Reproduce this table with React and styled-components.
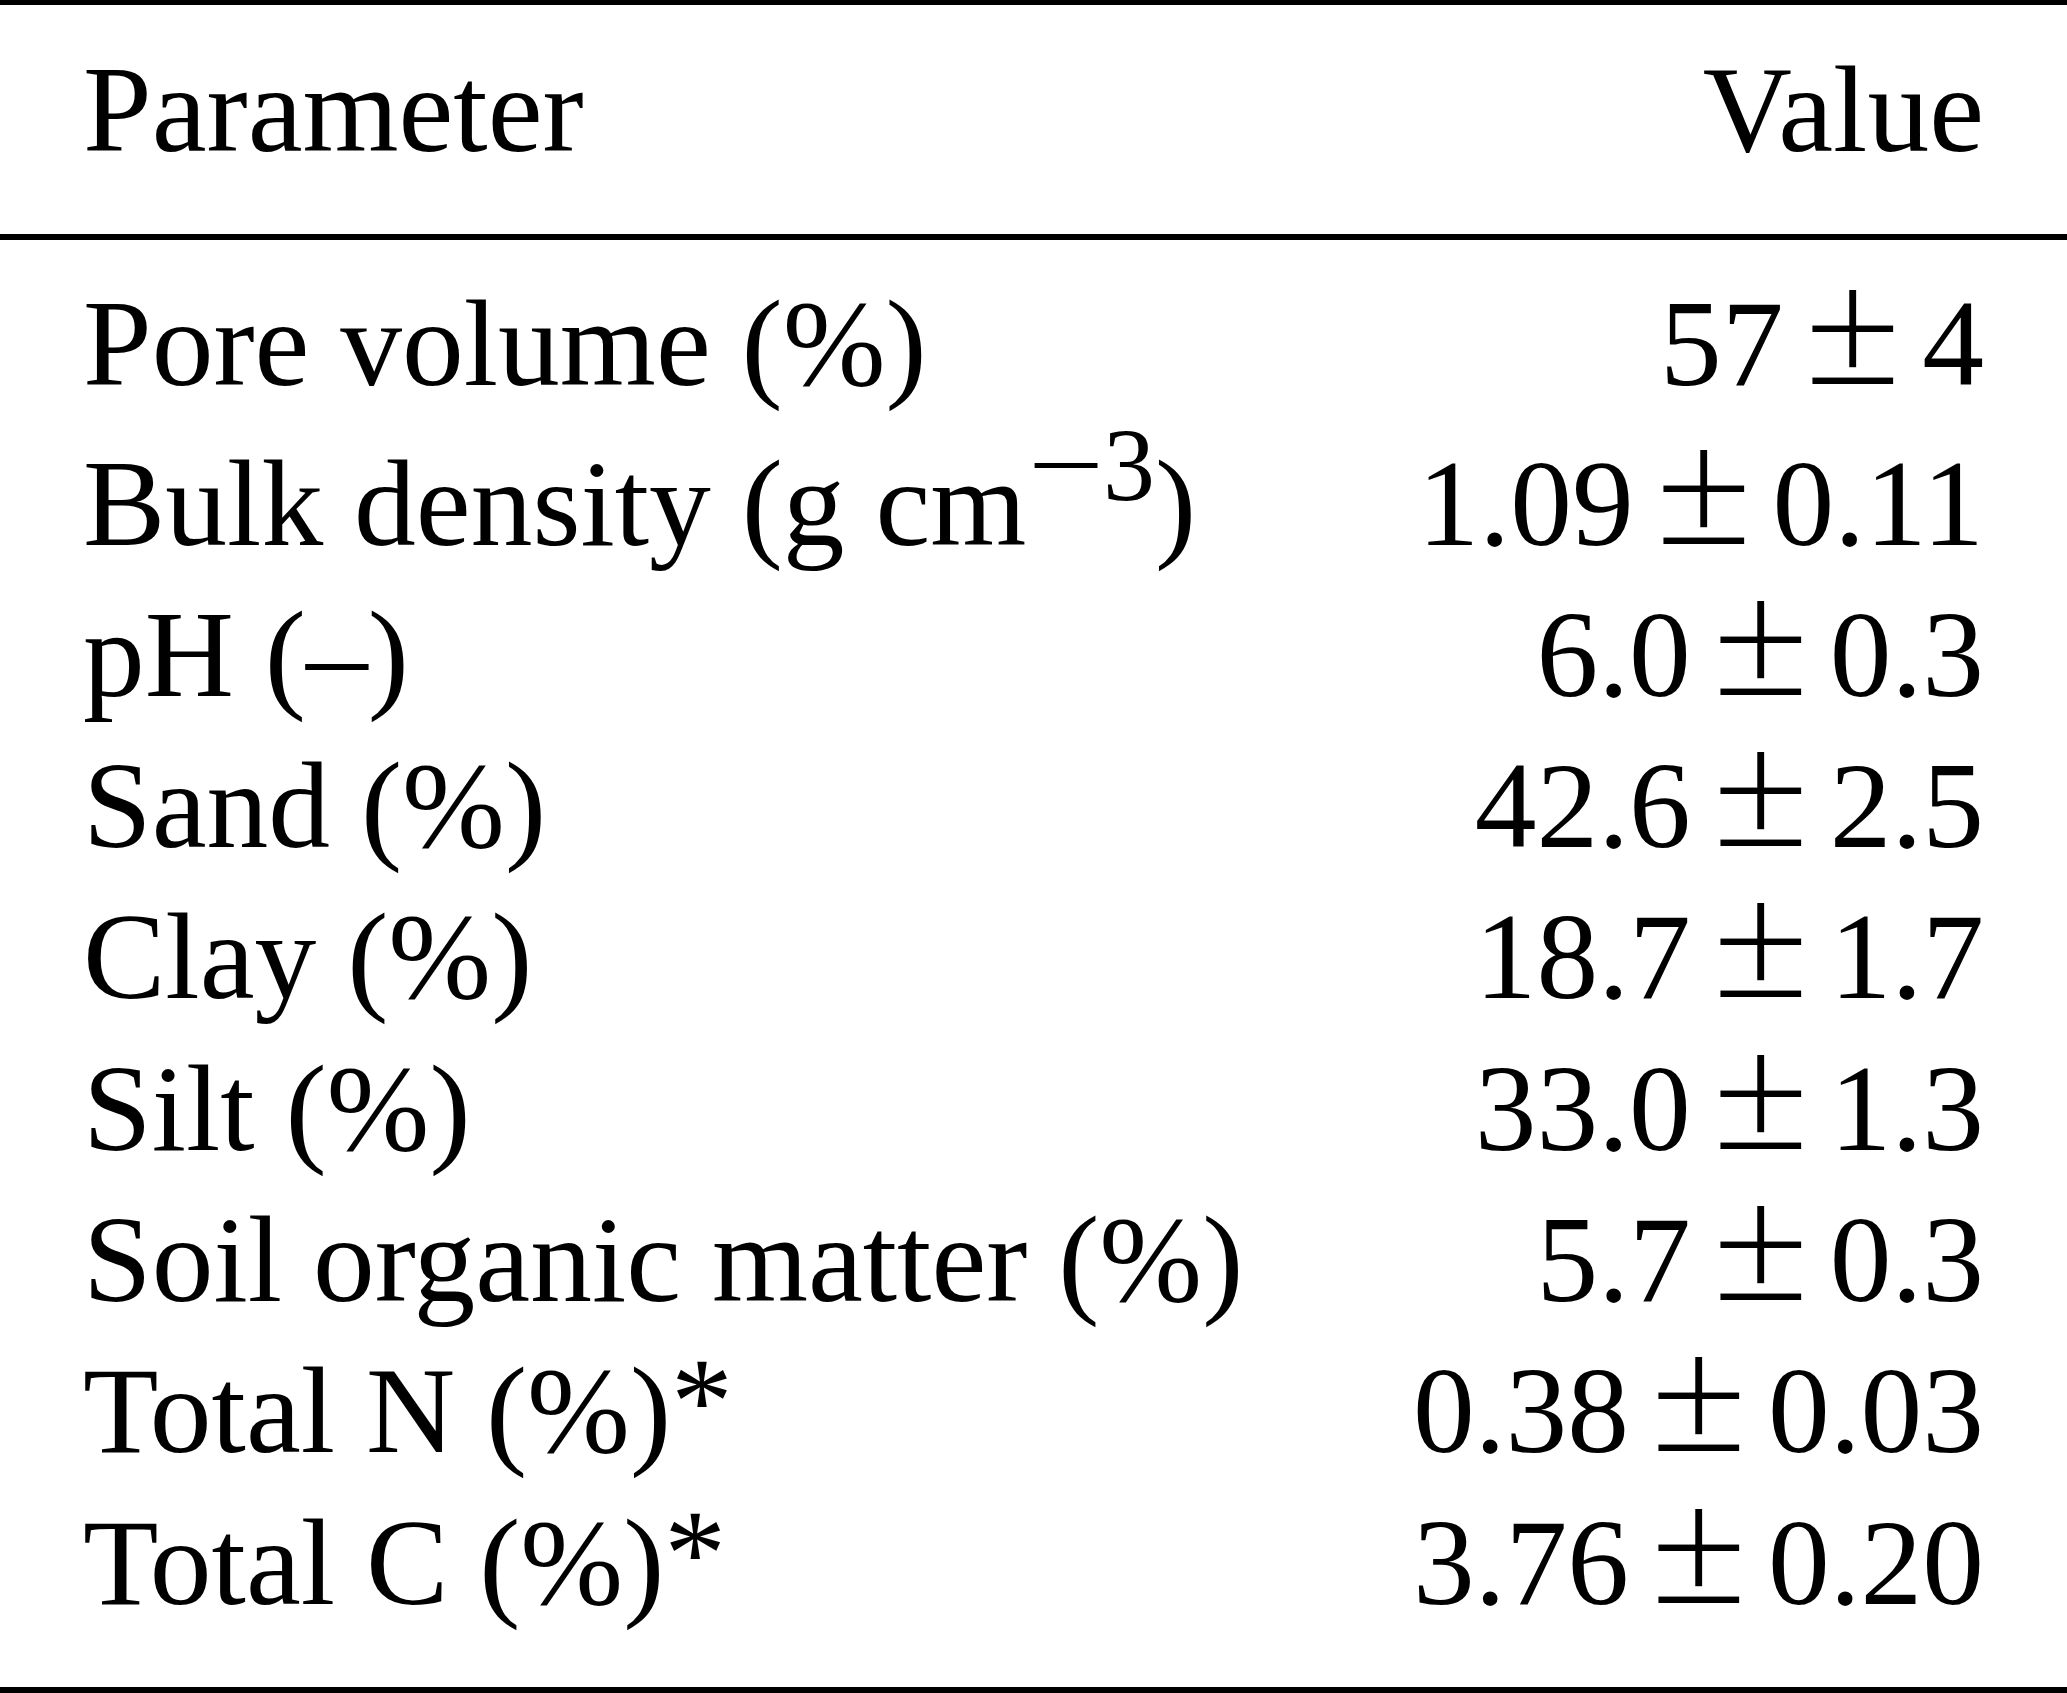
import React from 'react'
import styled, { createGlobalStyle } from 'styled-components'

const rows = [
  { label: 'Pore volume (%)', mean: '57', sd: '4' },
  { label: 'Bulk density', unit: true, mean: '1.09', sd: '0.11', extra: 8 },
  { label: 'pH (–)', mean: '6.0', sd: '0.3' },
  { label: 'Sand (%)', mean: '42.6', sd: '2.5' },
  { label: 'Clay (%)', mean: '18.7', sd: '1.7' },
  { label: 'Silt (%)', mean: '33.0', sd: '1.3' },
  { label: 'Soil organic matter (%)', mean: '5.7', sd: '0.3' },
  { label: 'Total N (%)', star: true, mean: '0.38', sd: '0.03' },
  { label: 'Total C (%)', star: true, mean: '3.76', sd: '0.20' },
]

const GlobalStyle = createGlobalStyle`
  html, body {
    margin: 0;
    padding: 0;
    background: #fff;
  }
  body {
    font-family: 'Liberation Serif', 'Times New Roman', serif;
    color: #000;
  }
`

const Table = styled.section`
  width: 2067px;
  display: flex;
  flex-direction: column;
  font-size: 123.5px;
  line-height: 151.3px;
  border-top: 5px solid #000;
  border-bottom: 6px solid #000;
`

const Head = styled.div`
  padding: 29px 0 49px;
  border-bottom: 6px solid #000;
`

const Body = styled.div`
  padding: 28px 0 49px;
`

const Row = styled.div`
  display: flex;
  justify-content: space-between;
  padding: ${(p) => p.$extra || 0}px 83px 0 83px;
  white-space: nowrap;
`

const Cell = styled.span`
  display: block;
`

const Sup = styled.span`
  font-size: 104px;
  line-height: 0;
  vertical-align: 45px;
  margin-left: 2px;
`

const SupMinus = styled.span`
  display: inline-block;
  transform: scaleX(1.3);
  transform-origin: 0 50%;
  margin-right: 16px;
`

const Star = styled.span`
  line-height: 0;
  vertical-align: 10px;
`

// the math ± is wider and taller than the text glyph, thin the strokes back
const PlusMinus = styled.span`
  display: inline-block;
  margin: 0 35px 0 36px;
  transform: scale(1.44, 1.375);
  transform-origin: 50% 117px;
  -webkit-text-stroke: 1.4px #fff;
`

const App = () => {
  return (
    <>
      <GlobalStyle />
      <Table>
        <Head>
          <Row>
            <Cell>Parameter</Cell>
            <Cell>Value</Cell>
          </Row>
        </Head>
        <Body>
          {rows.map((r) => (
            <Row key={r.label} $extra={r.extra}>
              <Cell>
                {r.label}
                {r.unit && (
                  <>
                    {' (g cm'}
                    <Sup>
                      <SupMinus>−</SupMinus>3
                    </Sup>
                    {')'}
                  </>
                )}
                {r.star && <Star>*</Star>}
              </Cell>
              <Cell>
                {r.mean}
                <PlusMinus>±</PlusMinus>
                {r.sd}
              </Cell>
            </Row>
          ))}
        </Body>
      </Table>
    </>
  )
}

export default App
